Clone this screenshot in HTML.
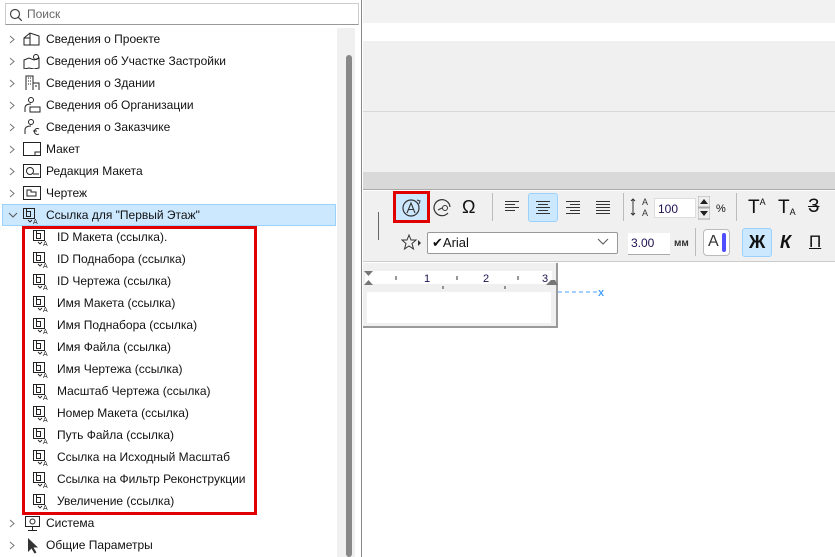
<!DOCTYPE html>
<html><head><meta charset="utf-8"><style>
*{margin:0;padding:0;box-sizing:border-box}
body{width:835px;height:557px;overflow:hidden;position:relative;background:#fff;font-family:"Liberation Sans",sans-serif;font-size:12px;color:#111}
.a{position:absolute}
.row{position:absolute;height:22px;line-height:22px;white-space:nowrap}
.chev{position:absolute;left:9px;top:7px;width:6px;height:9px}
svg{position:absolute}
</style></head><body>
<svg width="0" height="0" style="position:absolute">
<defs>
<g id="ref" fill="none" stroke="#222" stroke-width="1"><rect x="1.5" y="1.5" width="11" height="10"/><path d="M4.5 4.5h4v5h-4zM4.5 4.5v-3"/><path d="M6 13l2 2 2-2" stroke-width="0.9"/><text x="11" y="17" font-size="7" stroke="none" fill="#222" font-family="Liberation Sans">A</text></g>
<path id="ch" d="M1 1l4 3.5-4 3.5" fill="none" stroke="#777" stroke-width="1"/>
</defs></svg>
<div class="a" style="left:0;top:0;width:362px;height:557px;background:#fff;border-right:1px solid #888"></div>
<div class="a" style="left:5px;top:3px;width:354px;height:22px;border:1px solid #ccc;border-bottom:1px solid #999;background:#fff"></div>
<svg style="left:9px;top:8px" width="14" height="14"><circle cx="6" cy="6" r="4.5" fill="none" stroke="#444" stroke-width="1.2"/><path d="M9.3 9.3l3.5 3.5" stroke="#444" stroke-width="1.3"/></svg>
<div class="a" style="left:27px;top:7px;color:#666">Поиск</div>
<div class="a" style="left:337px;top:28px;width:18px;height:529px;background:#f0f0f0"></div>
<div class="a" style="left:346px;top:55px;width:6px;height:502px;background:#888;border-radius:3px"></div>
<div class="a" style="left:2px;top:204px;width:334px;height:22px;background:#cce8ff;border:1px solid #99d1ff"></div>

<div class="row" style="top:28px;left:0"><svg class="chev"><use href="#ch"/></svg><svg style="left:23px;top:4px" width="18" height="14"><path d="M1 13V6l6-5 9 3v9zM7 1v12M1 6h6" fill="none" stroke="#222"/></svg><span style="position:absolute;left:46px">Сведения о Проекте</span></div>
<div class="row" style="top:50px;left:0"><svg class="chev"><use href="#ch"/></svg><svg style="left:23px;top:3px" width="18" height="16"><path d="M1 7l5-2 5 2 5-2v10l-5 1-5-1-5 1z" fill="none" stroke="#222"/><circle cx="13" cy="4" r="2.5" fill="none" stroke="#222"/></svg><span style="position:absolute;left:46px">Сведения об Участке Застройки</span></div>
<div class="row" style="top:72px;left:0"><svg class="chev"><use href="#ch"/></svg><svg style="left:25px;top:3px" width="16" height="16"><path d="M1 15V1h7v14M8 8h6v7" fill="none" stroke="#222"/><path d="M3 3h1M5 3h1M3 6h1M5 6h1M3 9h1M5 9h1M10 11h2" stroke="#222"/></svg><span style="position:absolute;left:46px">Сведения о Здании</span></div>
<div class="row" style="top:94px;left:0"><svg class="chev"><use href="#ch"/></svg><svg style="left:23px;top:3px" width="18" height="16"><circle cx="8" cy="3" r="2.5" fill="none" stroke="#222"/><path d="M2 15v-4q0-4 6-4M7 10h10v5H7z" fill="none" stroke="#222"/></svg><span style="position:absolute;left:46px">Сведения об Организации</span></div>
<div class="row" style="top:116px;left:0"><svg class="chev"><use href="#ch"/></svg><svg style="left:23px;top:3px" width="18" height="16"><circle cx="8" cy="3" r="2.5" fill="none" stroke="#222"/><path d="M2 15v-4q0-4 6-4M16 10a3 3 0 1 0 0 5M10 12h4" fill="none" stroke="#222"/></svg><span style="position:absolute;left:46px">Сведения о Заказчике</span></div>
<div class="row" style="top:138px;left:0"><svg class="chev"><use href="#ch"/></svg><svg style="left:23px;top:4px" width="18" height="14"><rect x="0.5" y="0.5" width="17" height="13" fill="none" stroke="#222"/><path d="M12 13v-3h5" fill="none" stroke="#222"/></svg><span style="position:absolute;left:46px">Макет</span></div>
<div class="row" style="top:160px;left:0"><svg class="chev"><use href="#ch"/></svg><svg style="left:23px;top:4px" width="18" height="14"><rect x="0.5" y="0.5" width="17" height="13" fill="none" stroke="#222"/><circle cx="7" cy="7" r="3.5" fill="none" stroke="#222"/><path d="M10 10h6" stroke="#222"/></svg><span style="position:absolute;left:46px">Редакция Макета</span></div>
<div class="row" style="top:182px;left:0"><svg class="chev"><use href="#ch"/></svg><svg style="left:23px;top:4px" width="18" height="14"><rect x="0.5" y="0.5" width="17" height="13" fill="none" stroke="#222"/><path d="M4 10V4h4v2h5v4z" fill="none" stroke="#222"/></svg><span style="position:absolute;left:46px">Чертеж</span></div>
<div class="row" style="top:204px;left:0"><svg style="left:8px;top:8px" width="10" height="7"><path d="M1 1l4 4 4-4" fill="none" stroke="#555"/></svg><svg style="left:22px;top:3px" width="20" height="19"><use href="#ref"/></svg><span style="position:absolute;left:46px">Ссылка для "Первый Этаж"</span></div>

<div class="a" style="left:22px;top:226px;width:235px;height:289px;border:3px solid #e00000"></div>
<div class="row" style="top:226px;left:0"><svg style="left:32px;top:3px" width="20" height="19"><use href="#ref"/></svg><span style="position:absolute;left:57px">ID Макета (ссылка).</span></div>
<div class="row" style="top:248px;left:0"><svg style="left:32px;top:3px" width="20" height="19"><use href="#ref"/></svg><span style="position:absolute;left:57px">ID Поднабора (ссылка)</span></div>
<div class="row" style="top:270px;left:0"><svg style="left:32px;top:3px" width="20" height="19"><use href="#ref"/></svg><span style="position:absolute;left:57px">ID Чертежа (ссылка)</span></div>
<div class="row" style="top:292px;left:0"><svg style="left:32px;top:3px" width="20" height="19"><use href="#ref"/></svg><span style="position:absolute;left:57px">Имя Макета (ссылка)</span></div>
<div class="row" style="top:314px;left:0"><svg style="left:32px;top:3px" width="20" height="19"><use href="#ref"/></svg><span style="position:absolute;left:57px">Имя Поднабора (ссылка)</span></div>
<div class="row" style="top:336px;left:0"><svg style="left:32px;top:3px" width="20" height="19"><use href="#ref"/></svg><span style="position:absolute;left:57px">Имя Файла (ссылка)</span></div>
<div class="row" style="top:358px;left:0"><svg style="left:32px;top:3px" width="20" height="19"><use href="#ref"/></svg><span style="position:absolute;left:57px">Имя Чертежа (ссылка)</span></div>
<div class="row" style="top:380px;left:0"><svg style="left:32px;top:3px" width="20" height="19"><use href="#ref"/></svg><span style="position:absolute;left:57px">Масштаб Чертежа (ссылка)</span></div>
<div class="row" style="top:402px;left:0"><svg style="left:32px;top:3px" width="20" height="19"><use href="#ref"/></svg><span style="position:absolute;left:57px">Номер Макета (ссылка)</span></div>
<div class="row" style="top:424px;left:0"><svg style="left:32px;top:3px" width="20" height="19"><use href="#ref"/></svg><span style="position:absolute;left:57px">Путь Файла (ссылка)</span></div>
<div class="row" style="top:446px;left:0"><svg style="left:32px;top:3px" width="20" height="19"><use href="#ref"/></svg><span style="position:absolute;left:57px">Ссылка на Исходный Масштаб</span></div>
<div class="row" style="top:468px;left:0"><svg style="left:32px;top:3px" width="20" height="19"><use href="#ref"/></svg><span style="position:absolute;left:57px">Ссылка на Фильтр Реконструкции</span></div>
<div class="row" style="top:490px;left:0"><svg style="left:32px;top:3px" width="20" height="19"><use href="#ref"/></svg><span style="position:absolute;left:57px">Увеличение (ссылка)</span></div>
<div class="row" style="top:512px;left:0"><svg class="chev"><use href="#ch"/></svg><svg style="left:24px;top:3px" width="18" height="17"><rect x="1.5" y="1.5" width="14" height="10" fill="none" stroke="#222"/><circle cx="8.5" cy="6.5" r="2.5" fill="none" stroke="#222"/><path d="M8.5 12v3M4 15.5h9" stroke="#222"/></svg><span style="position:absolute;left:46px">Система</span></div>
<div class="row" style="top:534px;left:0"><svg class="chev"><use href="#ch"/></svg><svg style="left:26px;top:3px" width="14" height="17"><path d="M2 1v14l3.5-3.5 3 5 2-1-3-5H12z" fill="#333"/></svg><span style="position:absolute;left:46px">Общие Параметры</span></div>

<div class="a" style="left:363px;top:0;width:472px;height:23px;background:#f2f2f2"></div>
<div class="a" style="left:363px;top:23px;width:472px;height:18px;background:#fff"></div>
<div class="a" style="left:363px;top:41px;width:472px;height:131px;background:#f0f0f0"></div>
<div class="a" style="left:363px;top:111px;width:472px;height:1px;background:#d8d8d8"></div>
<div class="a" style="left:363px;top:172px;width:472px;height:18px;background:#d9d9d9;border-bottom:1px solid #aaa"></div>
<div class="a" style="left:363px;top:191px;width:472px;height:71px;background:#f0f0f0;border-bottom:1px solid #ccc"></div>
<div class="a" style="left:378px;top:212px;width:1px;height:28px;background:#666"></div>
<div class="a" style="left:393px;top:191px;width:37px;height:32px;border:3px solid #e00000;background:#cce8ff"></div>
<svg style="left:400px;top:196px" width="24" height="22"><circle cx="11" cy="12" r="8" fill="none" stroke="#333" stroke-width="1.2"/><path d="M7 17l4-10 4 10M8.5 13.5h5" fill="none" stroke="#333" stroke-width="1.1"/><path d="M17 4l3 1-1 3" fill="none" stroke="#333"/></svg>
<svg style="left:432px;top:198px" width="22" height="20"><path d="M18 9a8 8 0 1 0-2 6" fill="none" stroke="#333" stroke-width="1.2"/><circle cx="13" cy="10" r="2.5" fill="none" stroke="#333"/><path d="M6 12l4-2" stroke="#333"/></svg>
<div class="a" style="left:462px;top:197px;font-size:18px">Ω</div>
<div class="a" style="left:492px;top:193px;width:1px;height:28px;background:#bbb"></div>
<svg style="left:505px;top:200px" width="110" height="14" fill="#333"><rect x="0" y="1" width="14" height="1"/><rect x="0" y="4" width="10" height="1"/><rect x="0" y="7" width="14" height="1"/><rect x="0" y="10" width="10" height="1"/></svg>
<div class="a" style="left:528px;top:193px;width:30px;height:29px;background:#cce8ff;border:1px solid #99d1ff;border-radius:3px"></div>
<svg style="left:536px;top:200px" width="14" height="14" fill="#333"><rect x="0" y="1" width="14" height="1"/><rect x="2" y="4" width="10" height="1"/><rect x="0" y="7" width="14" height="1"/><rect x="2" y="10" width="10" height="1"/><rect x="0" y="13" width="14" height="1"/></svg>
<svg style="left:566px;top:200px" width="14" height="14" fill="#333"><rect x="0" y="1" width="14" height="1"/><rect x="4" y="4" width="10" height="1"/><rect x="0" y="7" width="14" height="1"/><rect x="4" y="10" width="10" height="1"/><rect x="0" y="13" width="14" height="1"/></svg>
<svg style="left:596px;top:200px" width="14" height="14" fill="#333"><rect x="0" y="1" width="14" height="1"/><rect x="0" y="4" width="14" height="1"/><rect x="0" y="7" width="14" height="1"/><rect x="0" y="10" width="14" height="1"/><rect x="0" y="13" width="14" height="1"/></svg>
<div class="a" style="left:623px;top:193px;width:1px;height:28px;background:#bbb"></div>
<svg style="left:630px;top:196px" width="22" height="22"><path d="M3 3v16M1 5l2-2 2 2M1 17l2 2 2-2" fill="none" stroke="#333"/><text x="12" y="9" font-size="9" fill="#333" font-family="Liberation Sans">A</text><text x="12" y="20" font-size="9" fill="#333" font-family="Liberation Sans">A</text></svg>
<div class="a" style="left:654px;top:198px;width:42px;height:20px;background:#fff;border:1px solid #ddd;line-height:20px;padding-left:3px;color:#201050">100</div>
<svg style="left:698px;top:196px" width="12" height="24"><rect x="0" y="0" width="12" height="11" fill="#eee" stroke="#aaa"/><path d="M2 8l4-5 4 5z" fill="#222"/><rect x="0" y="12" width="12" height="11" fill="#eee" stroke="#aaa"/><path d="M2 15l4 5 4-5z" fill="#222"/></svg>
<div class="a" style="left:716px;top:203px;font-size:11px">%</div>
<div class="a" style="left:736px;top:193px;width:1px;height:28px;background:#bbb"></div>
<div class="a" style="left:748px;top:197px;font-size:19px">T<sup style="font-size:9px;vertical-align:8px">A</sup></div>
<div class="a" style="left:778px;top:197px;font-size:19px">T<sub style="font-size:9px;vertical-align:-2px">A</sub></div>
<div class="a" style="left:808px;top:196px;font-size:19px;text-decoration:line-through">З</div>

<svg style="left:401px;top:234px" width="20" height="18"><path d="M8 1l2 5h5l-4 3.5 1.5 5.5L8 12l-4.5 3L5 9.5 1 6h5z" fill="none" stroke="#333"/><path d="M17 6l3 3-3 3z" fill="#333"/></svg>
<div class="a" style="left:427px;top:232px;width:191px;height:22px;background:#fff;border:1px solid #999;border-radius:2px;line-height:20px;padding-left:4px;font-size:13px">✔Arial</div>
<svg style="left:597px;top:238px" width="12" height="8"><path d="M1 1l5 5 5-5" fill="none" stroke="#555"/></svg>
<div class="a" style="left:628px;top:233px;width:42px;height:22px;background:#fff;border-bottom:1px solid #aaa;line-height:21px;padding-left:3px;color:#201050">3.00</div>
<div class="a" style="left:674px;top:238px;font-size:10px;font-weight:bold;color:#333">мм</div>
<div class="a" style="left:695px;top:228px;width:1px;height:28px;background:#bbb"></div>
<div class="a" style="left:703px;top:229px;width:27px;height:27px;background:#fff;border:1px solid #bbb;border-radius:4px"></div>
<div class="a" style="left:708px;top:233px;font-size:16px;color:#333">A</div>
<div class="a" style="left:722px;top:233px;width:4px;height:19px;background:#4f4fff;border-radius:2px"></div>
<div class="a" style="left:742px;top:228px;width:30px;height:29px;background:#cce8ff;border:1px solid #99d1ff;border-radius:3px"></div>
<div class="a" style="left:749px;top:232px;font-size:18px;font-weight:bold">Ж</div>
<div class="a" style="left:780px;top:232px;font-size:18px;font-style:italic;font-weight:bold">К</div>
<div class="a" style="left:809px;top:232px;font-size:17px;text-decoration:underline">П</div>

<div class="a" style="left:363px;top:263px;width:195px;height:65px;background:#f0f0f0;border-right:2px solid #999;border-bottom:2px solid #999"></div>
<div class="a" style="left:365px;top:271px;width:187px;height:13px;background:#fff"></div>
<div class="a" style="left:367px;top:292px;width:184px;height:31px;background:#fff"></div>
<svg style="left:363px;top:268px" width="195" height="22"><path d="M1 3h9l-4.5 5zM1 17h9l-4.5-5z" fill="#777"/><path d="M195 17h-12l5-5h4z" fill="#777"/><path d="M33 8v4M94 8v4M155 8v4M80 18v3M142 18v3" stroke="#333"/><text x="61" y="14" font-size="11" fill="#201050" font-family="Liberation Sans">1</text><text x="120" y="14" font-size="11" fill="#201050" font-family="Liberation Sans">2</text><text x="179" y="14" font-size="11" fill="#201050" font-family="Liberation Sans">3</text></svg>
<svg style="left:556px;top:286px" width="50" height="12"><path d="M2 6h40" stroke="#4aa3ff" stroke-dasharray="4 3"/><text x="42" y="10" font-size="11" font-weight="bold" fill="#4aa3ff" font-family="Liberation Sans">x</text></svg>
</body></html>
